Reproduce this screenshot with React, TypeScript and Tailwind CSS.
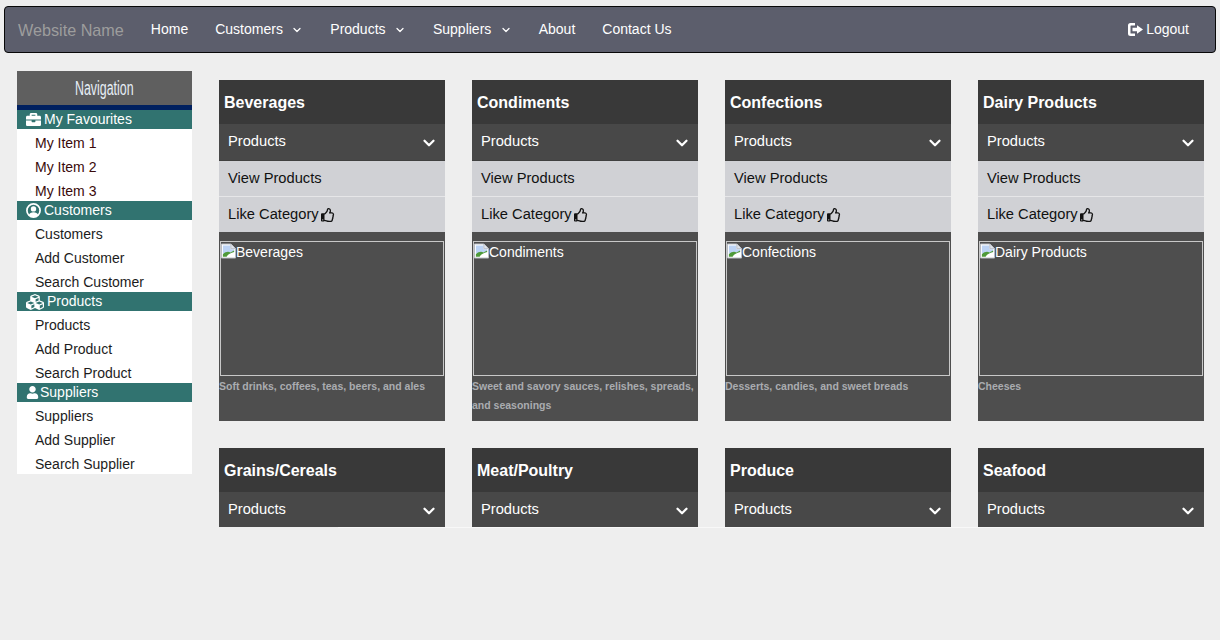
import { ChevronDown } from "lucide-react";
import { FaBriefcase, FaCubes, FaRegThumbsUp, FaUser } from "react-icons/fa";
import type { ReactNode } from "react";

const UserCircleIcon = () => (
  <svg width="15" height="15" viewBox="0 0 15 15" className="shrink-0">
    <circle cx="7.5" cy="7.5" r="6.6" fill="none" stroke="currentColor" strokeWidth="1.7" />
    <circle cx="7.5" cy="5.9" r="2.7" fill="currentColor" />
    <path d="M2.8 12.2C3.6 10 5.2 9.3 7.5 9.3S11.4 10 12.2 12.2C11 13.4 9.3 14 7.5 14S4 13.4 2.8 12.2z" fill="currentColor" />
  </svg>
);

const sideGroups: { title: string; icon: ReactNode; items: string[]; itemClass: string }[] = [
  { title: "My Favourites", icon: <FaBriefcase size={15} />, items: ["My Item 1", "My Item 2", "My Item 3"], itemClass: "text-[#3a0a0a]" },
  { title: "Customers", icon: <UserCircleIcon />, items: ["Customers", "Add Customer", "Search Customer"], itemClass: "text-[#1c1c1c]" },
  { title: "Products", icon: <FaCubes size={18} />, items: ["Products", "Add Product", "Search Product"], itemClass: "text-[#1c1c1c]" },
  { title: "Suppliers", icon: <FaUser size={13} className="-mr-[2px]" />, items: ["Suppliers", "Add Supplier", "Search Supplier"], itemClass: "text-[#1c1c1c]" },
];

const categories = [
  { name: "Beverages", text: "Soft drinks, coffees, teas, beers, and ales" },
  { name: "Condiments", text: "Sweet and savory sauces, relishes, spreads, and seasonings" },
  { name: "Confections", text: "Desserts, candies, and sweet breads" },
  { name: "Dairy Products", text: "Cheeses" },
  { name: "Grains/Cereals", text: "" },
  { name: "Meat/Poultry", text: "" },
  { name: "Produce", text: "" },
  { name: "Seafood", text: "" },
];

const LogoutIcon = () => (
  <svg width="15" height="13" viewBox="0 0 15 13" className="shrink-0">
    <path d="M7 0H2.5A2.5 2.5 0 0 0 0 2.5v8A2.5 2.5 0 0 0 2.5 13H7v-2.5H3a.5.5 0 0 1-.5-.5V3a.5.5 0 0 1 .5-.5h4z" fill="currentColor" />
    <path d="M9 2.2 15 6.5 9 10.8V8.3H4.5V4.7H9z" fill="currentColor" />
  </svg>
);

const BrokenImage = () => (
  <svg width="15" height="16" viewBox="0 0 16 16" className="shrink-0">
    <path d="M0.5 0.5H10.5L15.5 5.5V15.5H0.5z" fill="#ffffff" stroke="#b8bcc4" />
    <path d="M2 2H10V6H14V9L2 11z" fill="#bcd3f5" />
    <path d="M2 14V11.5C5 8.5 8 8.5 10 9.5L14 7.5V9C10 10 7 12 6 14z" fill="#4e9a3a" />
    <path d="M10.5 0.5V5.5H15.5" fill="#dfe3ea" stroke="#b8bcc4" />
  </svg>
);

const NavLink = ({ label, caret }: { label: string; caret?: boolean }) => (
  <div className="flex items-center text-white">
    <span>{label}</span>
    {caret && <ChevronDown size={12} strokeWidth={2.5} className="ml-[8.4px] mt-px" />}
  </div>
);

const Navbar = () => (
  <header className="mx-[4px] mt-[6px] flex h-[47px] shrink-0 items-center rounded-[4px] border border-[#080808] bg-[#5c5e6c] pl-[13px] pr-[26px] text-[14px]">
    <span className="mr-[27px] mt-[2px] text-[16.2px] text-[#9d9d9d]">Website Name</span>
    <nav className="flex items-center gap-[27px]">
      <NavLink label="Home" />
      <NavLink label="Customers" caret />
      <NavLink label="Products" caret />
      <NavLink label="Suppliers" caret />
      <NavLink label="About" />
      <NavLink label="Contact Us" />
    </nav>
    <div className="ml-auto flex items-center gap-[3px] text-white">
      <LogoutIcon />
      <span>Logout</span>
    </div>
  </header>
);

const Sidebar = () => (
  <aside className="ml-[17px] mt-[18px] w-[175px] shrink-0 text-[14px]">
    <div className="flex h-[34px] items-center justify-center bg-[#5f5f5f]">
      <span className="scale-x-[0.62] text-[20px] text-[#e6eef6]">Navigation</span>
    </div>
    <div className="h-[5px] bg-[#00205f]" />
    {sideGroups.map((group) => (
      <section key={group.title}>
        <div className="relative z-10 flex h-[19px] items-center gap-[3px] bg-[#317370] pl-[9px] text-white">
          {group.icon}
          <span>{group.title}</span>
        </div>
        <ul className={`h-[72px] bg-white pl-[18px] pt-[2px] ${group.itemClass}`}>
          {group.items.map((item) => (
            <li key={item} className="leading-[24px]">
              {item}
            </li>
          ))}
        </ul>
      </section>
    ))}
  </aside>
);

const CategoryCard = ({ name, text }: { name: string; text: string }) => (
  <article className="flex h-[341px] flex-col bg-[#4e4e4e]">
    <h3 className="flex h-[44px] shrink-0 items-center bg-[#393939] pl-[5px] pt-[2px] text-[16px] font-bold text-white">{name}</h3>
    <div className="flex h-[37px] shrink-0 items-center justify-between border-b border-[#404040] bg-[#484848] pb-[2px] pl-[9px] pr-[7px] text-[14.7px] text-white">
      <span>Products</span>
      <ChevronDown size={18} strokeWidth={3} className="mt-[4px]" />
    </div>
    <div className="flex h-[35px] shrink-0 items-center bg-[#d0d1d5] pl-[9px] text-[14.7px] text-[#111111]">View Products</div>
    <div className="flex h-[36px] shrink-0 items-center gap-[2px] border-t border-[#e6e6e8] bg-[#d0d1d5] pl-[9px] text-[14.7px] text-[#111111]">
      <span>Like Category</span>
      <FaRegThumbsUp size={14} />
    </div>
    <div className="mx-px mt-[9px] flex h-[135px] shrink-0 items-start border border-[#c8c8c8] pt-px text-[14px] leading-[19px] text-white">
      <BrokenImage />
      <span>{name}</span>
    </div>
    <p className="pt-px text-[10.5px] font-bold leading-[19px] text-[#aaacb0]">{text}</p>
  </article>
);

export default function App() {
  return (
    <div className="flex h-[640px] w-[1220px] flex-col overflow-hidden bg-[#eeeeee] font-['Liberation_Sans',Arial,sans-serif]">
      <Navbar />
      <main className="flex">
        <Sidebar />
        <div className="ml-[27px] mt-[27px] w-[985px]">
          <div className="grid h-[447px] grid-cols-[repeat(4,226px)] gap-[27px] overflow-hidden">
            {categories.map((c) => (
              <CategoryCard key={c.name} name={c.name} text={c.text} />
            ))}
          </div>
          <div className="ml-[119px] h-px bg-[#f8f8f8]" />
        </div>
      </main>
    </div>
  );
}
